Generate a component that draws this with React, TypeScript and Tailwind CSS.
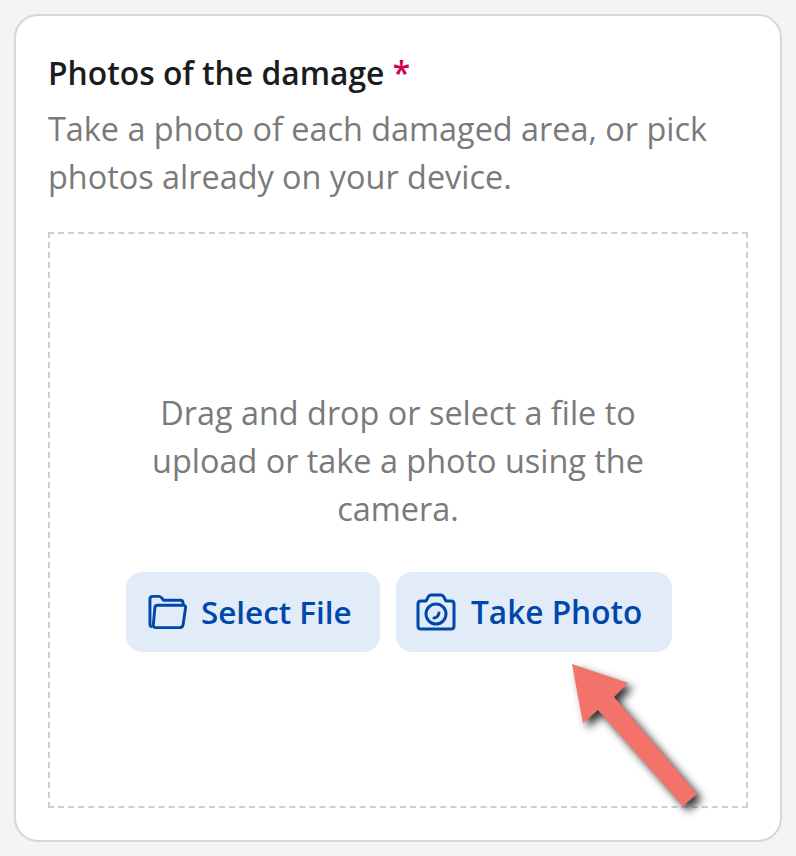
export default function App() {
  return (
    <div className="relative w-[796px] h-[856px] bg-[#f2f4f5] pt-[14px] pl-[14px] font-['Open_Sans',sans-serif]">
      <div className="w-[768px] h-[828px] bg-white border-2 border-[#d5d7d9] rounded-[24px] pt-[36px] px-[32px]">
        <h2 className="text-[31.8px] leading-[44px] font-semibold text-[#1b1c1e] -mt-[1px]">
          Photos of the damage <span className="text-[#d6004f]">*</span>
        </h2>
        <p className="text-[32.4px] leading-[48px] text-[#7a7a7a] mt-[9px]">
          Take a photo of each damaged area, or pick photos already on your device.
        </p>
        <div className="mt-[32px] h-[576px] border-2 border-dashed border-[#cfcfcf] flex flex-col items-center pt-[154px]">
          <p className="w-[540px] text-center text-[32.4px] leading-[48px] text-[#7a7a7a]">
            Drag and drop or select a file to upload or take a photo using the camera.
          </p>
          <div className="flex gap-4 mt-[40px] ml-[2px]">
            <button className="h-[80px] w-[254px] rounded-[16px] bg-[#e2ecf9] text-[#0047ab] text-[31.4px] font-semibold flex items-center pl-[22px] gap-[14px]">
              <svg width="39" height="36" viewBox="0 0 40 36" fill="none" stroke="currentColor" strokeWidth="3" strokeLinejoin="round">
                <path d="M4 33 Q2 33 2 30 V5 Q2 2 5 2 H11 Q13 2 14.500 4 L16 6 H33 Q36 6 36 9 V11" />
                <path d="M10 11 H36 Q39 11 38.500 14 L36 31 Q35.500 34 32 34 H8 Q5 34 5.500 31 L7 14 Q7 11 10 11 Z" />
              </svg>
              Select File
            </button>
            <button className="h-[80px] w-[276px] rounded-[16px] bg-[#e2ecf9] text-[#0047ab] text-[31.6px] font-semibold flex items-center pl-[20px] gap-[15px]">
              <svg width="40" height="38" viewBox="0 0 40 38" fill="none" stroke="currentColor" strokeWidth="3" strokeLinejoin="round">
                <path d="M5 8 H10 L12.500 3.500 Q13 2 15 2 H25 Q27 2 27.500 3.500 L30 8 H35 Q38 8 38 11 V33 Q38 36 35 36 H5 Q2 36 2 33 V11 Q2 8 5 8 Z" />
                <circle cx="20" cy="21" r="10" />
                <path d="M18 25 Q22 24.500 23 20" strokeLinecap="round" />
              </svg>
              Take Photo
            </button>
          </div>
        </div>
      </div>
      <svg className="absolute left-0 top-0 pointer-events-none drop-shadow-[5px_5px_4px_rgba(30,30,30,0.9)]" width="796" height="856" viewBox="0 0 796 856">
        <polygon points="572,664 628,683 614,697 697,794 683,806 598,710 583,723" fill="#f3736a" />
      </svg>
    </div>
  );
}
